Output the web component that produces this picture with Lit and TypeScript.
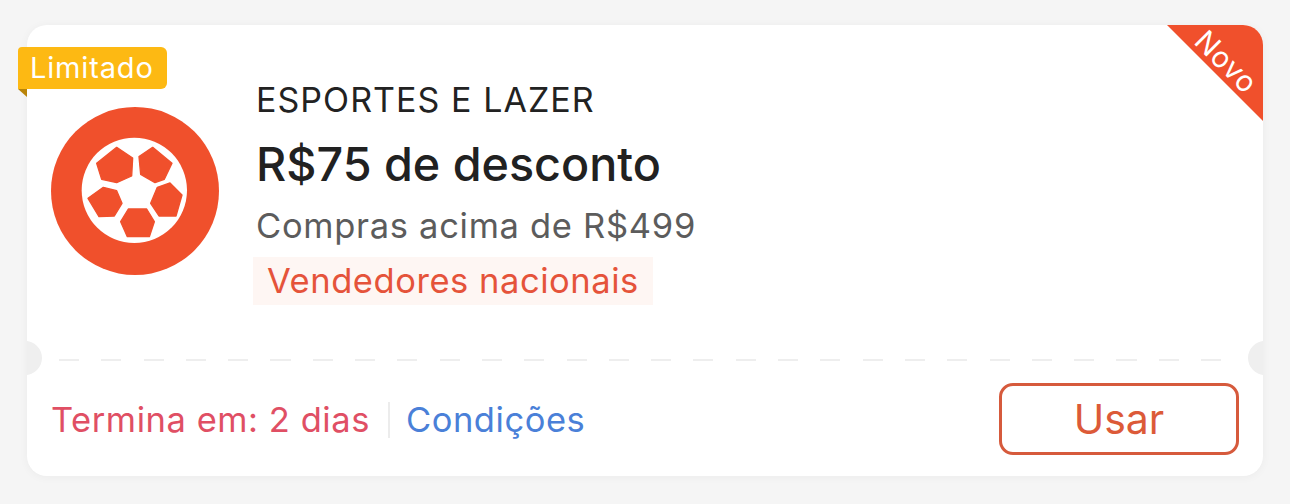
import { LitElement, html, css } from "lit";
import { customElement } from "lit/decorators.js";

@customElement("app-root")
export class AppRoot extends LitElement {
  static styles = css`
    :host { display: block; width: 1290px; height: 504px; background: #f5f5f5; overflow: hidden; font-family: Inter, "Noto Sans", sans-serif; }
    .page { padding: 25px 27px 28px; }
    .card { position: relative; height: 451px; background: #fff; border-radius: 20px; box-shadow: 0 1px 10px rgba(0,0,0,.045); display: flex; flex-direction: column; }
    .top { height: 335px; display: flex; padding: 82px 0 0 24px; box-sizing: border-box; gap: 37px; }
    .ball { width: 168px; height: 168px; flex: none; display: block; }
    .info { display: flex; flex-direction: column; align-items: flex-start; margin-top: -27px; }
    .cat { font-size: 34px; line-height: 40px; letter-spacing: 1.05px; color: #222; }
    .title { font-size: 46.7px; line-height: 54px; font-weight: 500; color: #212121; margin-top: 17px; }
    .min { font-size: 34.5px; line-height: 42px; letter-spacing: 0.7px; color: #5c5c5c; margin-top: 14px; }
    .tag { font-size: 34.5px; line-height: 48px; letter-spacing: 0.55px; color: #e5533a; background: #fef6f3; padding: 0 14px; margin: 10px 0 0 -3px; }
    .dash { height: 2px; margin: -1px 32px 0; background: repeating-linear-gradient(90deg, #eeeeee 0 20px, transparent 20px 42.3px); }
    .bottom { flex: 1; display: flex; align-items: center; justify-content: space-between; padding: 0 24px; }
    .meta { display: flex; align-items: center; font-size: 34.5px; letter-spacing: 0.55px; margin-top: 2px; }
    .end { color: #e04f64; }
    .sep { width: 2px; height: 36px; background: #ececec; margin: 0 16px 0 18px; }
    .cond { color: #4a80d8; }
    .use { box-sizing: border-box; width: 240px; height: 72px; border: 3px solid #d65a3c; border-radius: 14px; background: #fff; color: #dc5a38; font: 400 41px Inter, sans-serif; display: flex; align-items: center; justify-content: center; }
    .notch { position: absolute; top: 316px; width: 34px; height: 34px; border-radius: 50%; background: #efefef; }
    .notch.l { left: -19px; clip-path: inset(0 0 0 19px); }
    .notch.r { right: -19px; clip-path: inset(0 19px 0 0); }
    .limit { position: absolute; left: -9px; top: 22px; height: 42px; width: 149px; box-sizing: border-box; padding-left: 12px; background: #fdb913; border-radius: 4px 6px 6px 0; color: #fff; font-size: 29px; line-height: 42px; letter-spacing: 0.85px; }
    .fold { position: absolute; left: -9px; top: 64px; width: 9px; height: 8px; background: #b98408; clip-path: polygon(0 0, 100% 0, 100% 100%); }
    .ribbon { position: absolute; right: 0; top: 0; width: 96px; height: 96px; }
    .tri { position: absolute; inset: 0; background: #f0502c; clip-path: polygon(0 0, 100% 100%, 100% 0); border-top-right-radius: 20px; }
    .ribbon span { position: absolute; left: 19px; top: 21px; width: 80px; text-align: center; color: #fff; font-size: 29px; line-height: 32px; letter-spacing: 0.6px; transform: rotate(45deg); }
  `;

  render() {
    return html`
      <div class="page">
        <div class="card">
          <div class="top">
            <svg class="ball" viewBox="18 21 504 504" aria-hidden="true">
              <circle cx="270" cy="273" r="252" fill="#f0502c"></circle>
              <circle cx="268" cy="271" r="158" fill="#fff"></circle>
              <g fill="#f0502c" stroke="#f0502c" stroke-width="4" stroke-linejoin="round">
                <polygon points="215,142 263,174 260,228 215,248 170,238 155,190"></polygon>
                <polygon points="323,142 381,190 358,238 330,248 287,223 282,170"></polygon>
                <polygon points="375,249 411,285 393,348 342,348 317,310 337,262"></polygon>
                <polygon points="250,327 305,327 328,365 313,410 247,410 227,365"></polygon>
                <polygon points="175,262 215,272 231,310 208,348 162,350 129,295"></polygon>
              </g>
            </svg>
            <div class="info">
              <div class="cat">ESPORTES E LAZER</div>
              <div class="title">R$75 de desconto</div>
              <div class="min">Compras acima de R$499</div>
              <div class="tag">Vendedores nacionais</div>
            </div>
          </div>
          <div class="dash"></div>
          <div class="bottom">
            <div class="meta">
              <span class="end">Termina em: 2 dias</span>
              <span class="sep"></span>
              <span class="cond">Condições</span>
            </div>
            <div class="use">Usar</div>
          </div>
          <div class="notch l"></div>
          <div class="notch r"></div>
          <div class="limit">Limitado</div>
          <div class="fold"></div>
          <div class="ribbon"><div class="tri"></div><span>Novo</span></div>
        </div>
      </div>
    `;
  }
}
